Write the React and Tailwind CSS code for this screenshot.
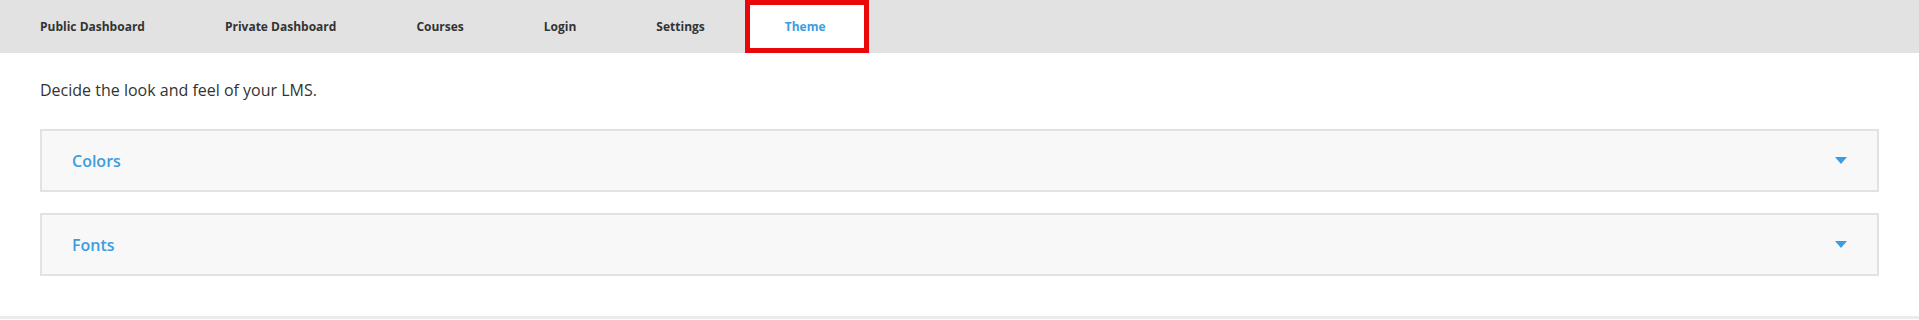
import React from "react";

const tabs = ["Public Dashboard", "Private Dashboard", "Courses", "Login", "Settings"];

const Panel = ({ title }) => {
  return (
    <div className="flex items-center justify-between h-[63px] border-2 border-[#e2e2e2] bg-[#f8f8f8] px-[30px]">
      <span className="text-[16px] font-semibold text-[#3b9de1]">{title}</span>
      <svg width="12" height="7" viewBox="0 0 12 7">
        <path d="M0 0 L12 0 L6 7 Z" fill="#3b9de1" />
      </svg>
    </div>
  );
};

const App = () => {
  return (
    <div className="w-full bg-white" style={{ fontFamily: '"Open Sans", "Liberation Sans", sans-serif' }}>
      <nav className="flex h-[53px] bg-[#e2e2e2]">
        {tabs.map((t) => (
          <div key={t} className="flex items-center px-10 text-[12px] font-bold text-[#333]">
            {t}
          </div>
        ))}
        <div className="flex items-center w-[124px] pl-[35px] border-[5px] border-[#e80808] bg-white text-[12px] font-bold text-[#3b9de1]">
          Theme
        </div>
      </nav>

      <div className="px-10 pt-[25px] pb-[40px] border-b-[3px] border-[#ececec]">
        <p className="text-[16px] leading-6 text-[#333]">Decide the look and feel of your LMS.</p>
        <div className="mt-[27px] flex flex-col gap-[21px]">
          <Panel title="Colors" />
          <Panel title="Fonts" />
        </div>
      </div>
    </div>
  );
};

export default App;
